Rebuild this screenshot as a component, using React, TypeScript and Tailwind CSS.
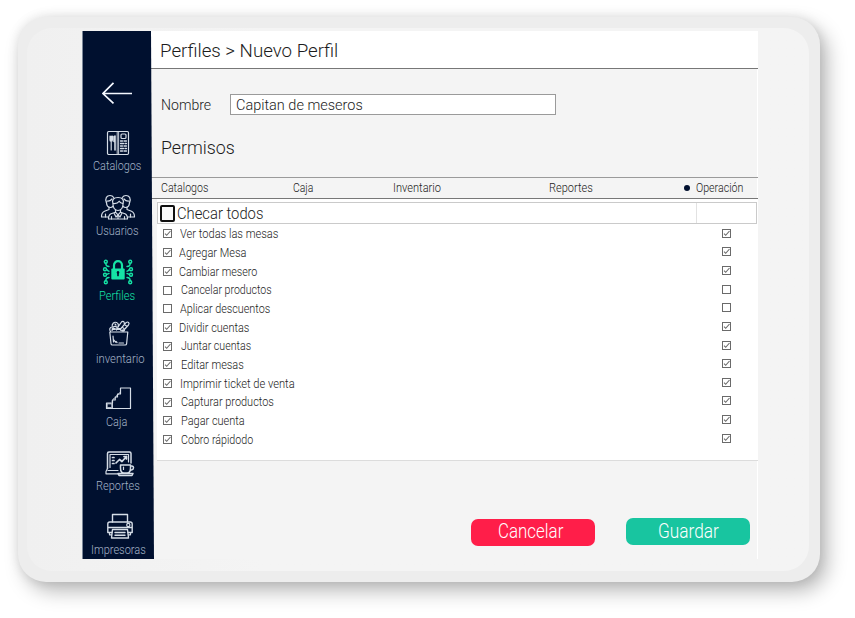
import { useLayoutEffect, useRef, useState } from "react";
import type { ReactNode } from "react";

/* Single line of text condensed or widened to an exact width. */
function Fit({ w, className = "", children }: { w: number; className?: string; children: string }) {
  const ref = useRef<HTMLSpanElement>(null);
  const [k, setK] = useState(1);
  useLayoutEffect(() => {
    if (ref.current) setK(w / ref.current.offsetWidth);
  }, [w, children]);
  return (
    <span className={`block shrink-0 whitespace-nowrap ${className}`} style={{ width: w }}>
      <span ref={ref} className="inline-block origin-left" style={{ transform: `scaleX(${k})` }}>
        {children}
      </span>
    </span>
  );
}

function Icon({ children, className = "" }: { children: ReactNode; className?: string }) {
  return (
    <svg
      viewBox="0 0 36 26"
      className={`block h-[26px] w-9 ${className}`}
      fill="none"
      stroke="currentColor"
      strokeWidth="1.2"
      strokeLinecap="round"
      strokeLinejoin="round"
    >
      {children}
    </svg>
  );
}

const catalogIcon = (
  <>
    <rect x="7.5" y="1.5" width="21" height="23" rx="1.2" />
    <path d="M17.2 1.5v23M18.6 1.5v23" strokeWidth="0.9" />
    <path d="M10 6v4q0 1.5 1.2 1.5T12.400 10V6M11.200 6v14" />
    <path d="M15 6v14M14 6.500v5h1" strokeWidth="1.600" />
    <rect x="21" y="4" width="5" height="4.500" rx="1" />
    <path d="M20.500 11h2m1.500 0h2.500M20.500 13.500h3m1.500 0h1.500M20.500 16h2m1.500 0h2.500M20.500 18.500h3m1.500 0h1.500M20.500 21h2m1.500 0h2.500" strokeWidth="1.300" />
  </>
);

const usersIcon = (
  <>
    <path d="M6.500 9C4.500 4 7 1.500 10 1.500c2 0 3 .8 3.700 2M22.300 3.500c.7-1.200 1.900-2 3.700-2 3 0 5.500 2.500 3.500 7.500" />
    <path d="M7 7c2 .3 4-.8 5-2M29 7c-2 .3-4-.8-5-2M6.500 8c0 3.500 1.700 5.500 4 5.500 1.200 0 2-.5 2.700-1.300M29.500 8c0 3.500-1.700 5.500-4 5.500-1.200 0-2-.5-2.700-1.300" />
    <path d="M13 9.500C11.500 5.500 14 3.500 18 3.500s6.500 2 5 6c.5 4-2 7-5 7s-5.500-3-5-7z" />
    <path d="M13.200 9.500c3 .3 5-.7 6-2.300.8 1.300 2 2 3.700 2.300" />
    <path d="M9 13.500v2l-4.500 1.700C2 18.200 1.500 20 1.500 23h7M27 13.500v2l4.500 1.700c2.500 1 3 2.800 3 5.800h-7" />
    <path d="M15.500 16v2.200l-4.500 1.600c-1.800.8-2.500 2-2.500 5.200h19c0-3.200-.7-4.400-2.500-5.200l-4.500-1.600V16M15.500 18.200l2.500 2.600 2.500-2.600M14 19l2 4 2-2.200 2 2.200 2-4M18 21v4" />
    <path d="M5.500 20v3M30.500 20v3M11.500 22.500V25M24.500 22.500V25" />
  </>
);

const lockIcon = (
  <>
    <rect x="11.300" y="9.500" width="13.400" height="11" rx="1" fill="currentColor" stroke="none" />
    <path d="M14 10V6.200a4 4 0 0 1 8 0V10" strokeWidth="2.200" />
    <path d="M18 13v3.500" stroke="#00102f" strokeWidth="1.700" />
    <circle cx="18" cy="13.500" r="1.300" fill="#00102f" stroke="none" />
    <g strokeWidth="1.400">
      <circle cx="5.800" cy="2.800" r="1.500" />
      <circle cx="30.200" cy="2.800" r="1.500" />
      <circle cx="5" cy="10.200" r="1.500" />
      <circle cx="31" cy="10.200" r="1.500" />
      <circle cx="5" cy="15.800" r="1.500" />
      <circle cx="31" cy="15.800" r="1.500" />
      <circle cx="5.800" cy="23.200" r="1.500" />
      <circle cx="30.200" cy="23.200" r="1.500" />
      <path d="M5.800 4.300c0 2.200 1.200 3.200 3.200 3.200M30.200 4.300c0 2.200-1.200 3.200-3.200 3.200M6.500 10.200c1 1.800 1.500 2 2.500 2M29.500 10.200c-1 1.800-1.500 2-2.500 2M6.500 15.800c1-1 1.500-1.300 2.500-1.300M29.500 15.800c-1-1-1.500-1.300-2.500-1.300M5.800 21.700c0-2.200 1.200-3.200 3.200-3.200M30.200 21.700c0-2.200-1.200-3.200-3.200-3.200" />
    </g>
  </>
);

const basketIcon = (
  <>
    <path d="M8.800 12 10 23.800q.2 1.200 1.400 1.200h12.800q1.200 0 1.400-1.200L26.800 12z" />
    <path d="M9.500 11.500C8 9.500 8.800 7 11.300 7 10.500 4 13 1.500 15.500 2.500c1.800.8 2.300 2.500 1.500 4.500" />
    <path d="M12 7.500c1-1.500 3-1.500 4 0M11 10.500c.5-2 3-2.500 4.500-.5 1-2 3.500-2 4.200.3M22 11l5.500-6c1.500-2-.5-4-2.500-2.300L19.500 9M17 7l3.500-5c1.200-1.300 3.200-.3 2.700 1.500" />
    <path d="m21.500 7.500 1.500 1M24 5l1.500 1M14 4l1 1M12 16l.5 6M12.500 19.500l2 2.700M15 21.500l1 1M18 23h4.500" />
    <path d="M11.500 9h2M16 9h3M21 10.500h2" strokeWidth="2" />
  </>
);

const stairsIcon = (
  <>
    <path d="M19.500 3h10v20.500h-24V18h6v-3h2.700v-3h2.300V9h3z" />
    <path d="M6.500 18.800h4.300v3.800H6.500zM11.500 18v5" strokeWidth="0.900" />
    <path d="m11 16 2-2.700M14 13l2-2.700M16.800 10l2-2.500" strokeWidth="0.900" />
  </>
);

const reportsIcon = (
  <>
    <path d="M5.500 17.500V2.500q0-1.500 1.500-1.500h20.500Q29 1 29 2.500v9.500" strokeWidth="1.500" />
    <path d="M8 16.500V3.500h18.500V11M5.500 17.500 4 20.500v2.300h14M6 19.500h10" />
    <path d="M10.500 6.500h1.500M10.500 9.500h1.500M10.500 12.500h1.500M14 12l3.500-3.500 2.500 2L24.500 5.500M22 5.500h2.500V8" strokeWidth="1.700" />
    <path d="M18.500 14h10v3c0 3-1.500 5-3.500 5h-3c-2 0-3.500-2-3.500-5zM28.500 15h1.200q1.800 0 1.800 1.800T29.500 19h-1.300M17 24.500h13l1-2H16z" strokeWidth="1.500" />
    <path d="M21.500 16v2.500" />
  </>
);

const printerIcon = (
  <>
    <path d="M10.500 9V1.500h15V9" strokeWidth="1.400" />
    <path d="M10 19.500H5.800V11q0-2 2-2h20.400q2 0 2 2v8.500H26M6 14.500h24" strokeWidth="1.400" />
    <circle cx="26.300" cy="12" r="1.600" />
    <path d="M10.500 16.500h15l1 8.500h-17zM13 19.500h10M13 22.200h10" strokeWidth="1.400" />
    <path d="M7.500 19.500v2.300h2M28.500 19.500v2.300h-2" />
  </>
);

const nav = [
  { label: "Catalogos", w: 48, icon: catalogIcon, top: "mt-[26px]", left: "ml-[17px]", text: "mt-[2px] ml-[10px]" },
  { label: "Usuarios", w: 43, icon: usersIcon, top: "mt-[20px]", left: "ml-[17px]", text: "mt-[3px] ml-[13px]" },
  { label: "Perfiles", w: 36, icon: lockIcon, top: "mt-[20px]", left: "ml-[17px]", text: "mt-[3px] ml-[16px]", active: true },
  { label: "inventario", w: 49, icon: basketIcon, top: "mt-[16px]", left: "ml-[18px]", text: "mt-[5px] ml-[13px]" },
  { label: "Caja", w: 21, icon: stairsIcon, top: "mt-[18px]", left: "ml-[18px]", text: "mt-[3px] ml-[23px]" },
  { label: "Reportes", w: 44, icon: reportsIcon, top: "mt-[21px]", left: "ml-[19px]", text: "mt-[1px] ml-[13px]" },
  { label: "Impresoras", w: 55, icon: printerIcon, top: "mt-[19px]", left: "ml-[19px]", text: "mt-[3px] ml-[8px]" },
];

const permissions = [
  { label: "Ver todas las mesas", on: true, w: 98, pad: "ml-[8px]", h: "h-[19px]" },
  { label: "Agregar Mesa", on: true, w: 67, pad: "ml-[7px]", h: "h-[19px]" },
  { label: "Cambiar mesero", on: true, w: 78, pad: "ml-[7px]", h: "h-[19px]" },
  { label: "Cancelar productos", on: false, w: 91, pad: "ml-[9px]", h: "h-[18px]" },
  { label: "Aplicar descuentos", on: false, w: 90, pad: "ml-[8px]", h: "h-[19px]" },
  { label: "Dividir cuentas", on: true, w: 70, pad: "ml-[7px]", h: "h-[19px]" },
  { label: "Juntar cuentas", on: true, w: 70, pad: "ml-[9px]", h: "h-[18px]" },
  { label: "Editar mesas", on: true, w: 63, pad: "ml-[9px]", h: "h-[19px]" },
  { label: "Imprimir ticket de venta", on: true, w: 115, pad: "ml-[8px]", h: "h-[19px]" },
  { label: "Capturar productos", on: true, w: 93, pad: "ml-[9px]", h: "h-[18px]" },
  { label: "Pagar cuenta", on: true, w: 64, pad: "ml-[9px]", h: "h-[19px]" },
  { label: "Cobro rápidodo", on: true, w: 72, pad: "ml-[9px]", h: "h-[19px]" },
];

function Check({ on }: { on: boolean }) {
  return (
    <svg viewBox="0 0 9 9" className="block size-[9px] shrink-0" fill="none" stroke="#6a6a6a">
      <rect x="0.500" y="0.500" width="8" height="8" fill="#fff" />
      {on && <path d="m2 4.700 1.700 1.600L7.500 2" strokeWidth="1.100" />}
    </svg>
  );
}

function Sidebar() {
  return (
    <aside className="relative z-10 -mr-[3px] flex w-[72px] shrink-0 flex-col border-l border-[#7b8799] bg-[#00102f] text-[#d5dde7] [clip-path:polygon(0_0,69px_0,72px_100%,0_100%)]">
      <svg viewBox="0 0 30 22" className="mt-[51px] ml-[19px] block h-[22px] w-[30px] shrink-0" fill="none" stroke="#f4f8ff" strokeWidth="1.700">
        <path d="M30 11.500H1M11.500.8 1 11.500l10.500 9.800" />
      </svg>
      {nav.map((n) => (
        <div key={n.label} className={`shrink-0 ${n.top} ${n.active ? "text-[#15e3a5]" : ""}`}>
          <Icon className={n.left}>{n.icon}</Icon>
          <Fit w={n.w} className={`h-4 text-[12px] leading-4 ${n.text} ${n.active ? "" : "text-[#a3b2c6]"}`}>
            {n.label}
          </Fit>
        </div>
      ))}
    </aside>
  );
}

export default function App() {
  return (
    <div className="h-[618px] w-[855px] overflow-hidden bg-white pt-[17px] pl-[18px] font-['Roboto','Liberation_Sans',sans-serif] font-light">
      <div className="h-[565px] w-[802px] rounded-[28px] bg-[#ededed] pt-[11px] pl-[9px] shadow-[7px_9px_20px_rgba(0,0,0,0.28),0_0_12px_rgba(0,0,0,0.09)]">
        <div className="h-[543px] w-[782px] rounded-[25px] bg-linear-to-r from-[#f0f0f0] to-[#f4f4f4] to-30% pt-[3px] pl-[55px]">
          <div className="flex h-[528px] w-[676px]">
            <Sidebar />
            <main className="flex w-[607px] shrink-0 flex-col border-r border-white bg-[#f4f4f4] text-[#1c1c1c]">
              <header className="flex h-[38px] w-[607px] shrink-0 items-center border-b border-[#777] bg-white pt-[2px] pl-[9px]">
                <Fit w={178} className="text-[18.500px] leading-6">Perfiles &gt; Nuevo Perfil</Fit>
              </header>

              <div className="mt-[25px] flex h-[21px] shrink-0 items-center pl-[10px]">
                <Fit w={50} className="text-[15.500px] leading-5">Nombre</Fit>
                <div className="ml-[19px] flex h-[21px] w-[326px] items-center border border-[#9a9a9a] bg-white pl-[5px]">
                  <Fit w={127} className="text-[15.500px] leading-[18px]">Capitan de meseros</Fit>
                </div>
              </div>

              <h2 className="mt-[21px] ml-[10px] h-6 shrink-0">
                <Fit w={74} className="text-[19px] leading-6">Permisos</Fit>
              </h2>

              <div className="mt-[17px] flex h-[22px] w-[607px] shrink-0 items-center border-t border-b border-t-[#9a9a9a] border-b-[#777] pl-[10px] text-[12px] leading-4">
                <Fit w={47}>Catalogos</Fit>
                <Fit w={20} className="ml-[85px]">Caja</Fit>
                <Fit w={48} className="ml-[80px]">Inventario</Fit>
                <Fit w={44} className="ml-[108px]">Reportes</Fit>
                <span className="ml-[91px] h-[6px] w-[6px] rounded-full bg-[#00102f]" />
                <Fit w={47} className="ml-[6px]">Operación</Fit>
              </div>

              <section className="ml-[6px] h-[262px] w-[601px] shrink-0 border-b border-[#dcdcdc] bg-white">
                <div className="mt-[3px] flex h-[22px] w-[600px] border border-[#cacaca]">
                  <div className="flex w-[539px] items-center border-r border-[#e2e2e2] pl-[2px]">
                    <span className="h-[17px] w-[15px] shrink-0 rounded-[2px] border-2 border-[#101010] bg-[#f8f8f8]" />
                    <Fit w={86} className="ml-[2px] pt-[2px] text-[16.500px] leading-5">Checar todos</Fit>
                  </div>
                </div>
                <div className="flex justify-between">
                  <ul className="pl-[6px]">
                    {permissions.map((p) => (
                      <li key={p.label} className={`flex items-center ${p.h}`}>
                        <Check on={p.on} />
                        <Fit w={p.w} className={`text-[12px] leading-4 ${p.pad}`}>{p.label}</Fit>
                      </li>
                    ))}
                  </ul>
                  <ul className="flex h-[223.500px] w-[36px] flex-col">
                    {permissions.map((p) => (
                      <li key={p.label} className="flex min-h-0 flex-1 items-center">
                        <Check on={p.on} />
                      </li>
                    ))}
                  </ul>
                </div>
              </section>

              <footer className="mt-[57px] flex shrink-0 pl-[320px] text-white">
                <button className="mt-px flex h-[27px] w-[124px] rounded-[7px] bg-[#ff1e49] pl-[27px]">
                  <Fit w={65} className="text-[19.500px] leading-[26px]">Cancelar</Fit>
                </button>
                <button className="ml-[31px] flex h-[27px] w-[124px] rounded-[7px] bg-[#18c5a0] pl-[32px]">
                  <Fit w={61} className="text-[19.500px] leading-[27px]">Guardar</Fit>
                </button>
              </footer>
            </main>
          </div>
        </div>
      </div>
    </div>
  );
}
